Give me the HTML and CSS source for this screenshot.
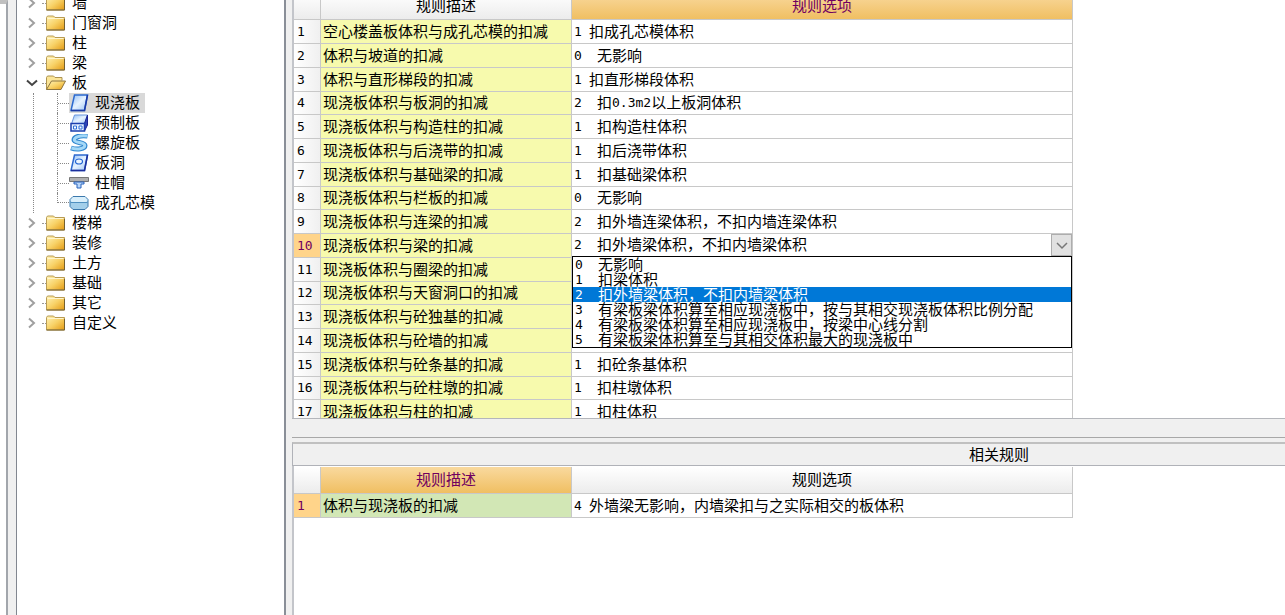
FILE: index.html
```html
<!DOCTYPE html>
<html lang="zh-CN">
<head>
<meta charset="utf-8">
<title>扣减规则</title>
<link rel="stylesheet" href="styles.css">
</head>
<body>
<svg class="defs" aria-hidden="true">
  <defs>
    <linearGradient id="gold" x1="0" y1="0" x2="1" y2="1"><stop offset="0" stop-color="#fff3b8"/><stop offset=".5" stop-color="#f8d267"/><stop offset="1" stop-color="#e39a14"/></linearGradient>
    <linearGradient id="pane" x1="0" y1="0" x2="1" y2="1"><stop offset="0" stop-color="#8dbcf6"/><stop offset=".5" stop-color="#e6f2ff"/><stop offset="1" stop-color="#9cc4f4"/></linearGradient>
    <symbol id="folder" viewBox="0 0 20 18"><path d="M.5 3.500l1-1.500h6l1.500 1.500h9.500v12.500H.5z" fill="url(#gold)" stroke="#b79b55"/><path d="M1.500 4.500h16" stroke="#fff6cf"/><path d="M.5 16h18V5" fill="none" stroke="#74602f"/></symbol>
    <symbol id="folder-open" viewBox="0 0 20 18"><path d="M.5 15.500V3.500l1-1.500h6l1.500 1.500h7v3" fill="#fbe597" stroke="#ad9350"/><path d="M.5 15.500l5-8.500h14l-4.500 8.500z" fill="url(#gold)" stroke="#8b7440"/></symbol>
    <symbol id="slab" viewBox="0 0 20 18"><path d="M5.500 1h13l-3 15.500H2z" fill="url(#pane)" stroke="#2b6ad0" stroke-width="1.500"/><path d="M2 16.500h13.500l3-15.500" fill="none" stroke="#1c3aa6" stroke-width="1.500"/></symbol>
    <symbol id="precast" viewBox="0 0 20 18"><path d="M5.500 1h13l-3 9H2.500z" fill="url(#pane)" stroke="#6a96de"/><path d="M15.500 17l3-6V1l-3 8.500z" fill="#3148b8" stroke="#1c2395"/><path d="M2 9.500h13.500V17H2z" fill="#e6f1ff" stroke="#1c3fae" stroke-width="1.500"/><path d="M4.500 12h3v3h-3zM10 12h3v3h-3z" fill="#fff" stroke="#2f6fd8"/></symbol>
    <symbol id="spiral" viewBox="0 0 20 18"><path d="M18.500 2C11 1 5 3 5 6s11 2 11 5.500S8 16 2 14" fill="none" stroke="#2f86cf" stroke-width="5"/><path d="M18 2C11 1.200 5.300 3 5.300 6s10.500 2 10.500 5.500S8 15.800 2.500 14" fill="none" stroke="#a4d8f7" stroke-width="3"/></symbol>
    <symbol id="hole" viewBox="0 0 20 18"><path d="M5.500 1h13l-3 15.500H2z" fill="url(#pane)" stroke="#2e6ad0" stroke-width="1.500"/><path d="M2 16.500h13.500l3-15.500" fill="none" stroke="#1c2f9c" stroke-width="1.500"/><ellipse cx="10" cy="7.500" rx="3.500" ry="2.500" fill="#e9f4ff" stroke="#2264d2" stroke-width="1.200"/></symbol>
    <symbol id="cap" viewBox="0 0 20 18"><path d="M.5 3.500h19v4H.5z" fill="#b0b0b0" stroke="#777"/><path d="M5 8h10v2h-3v4H8v-4H5z" fill="#b9d7fa" stroke="#2862bd"/></symbol>
    <symbol id="core" viewBox="0 0 20 18"><path d="M4 2.500h12l3 3v7l-3 3H4l-3-3v-7z" fill="#a3cfea" stroke="#3b78ac"/><path d="M4 3h12l2.500 3-1 2h-15l-1-2z" fill="#d9effb"/><path d="M1.500 8.500h17" stroke="#4f90c0"/></symbol>
    <symbol id="chev" viewBox="0 0 12 12"><path d="M3 1.500l5 4.500-5 4.500" fill="none" stroke="#a0a0a0" stroke-width="2"/></symbol>
    <symbol id="chev-open" viewBox="0 0 12 12"><path d="M1 3.500l5 4.500 5-4.500" fill="none" stroke="#444" stroke-width="2"/></symbol>
  </defs>
</svg>
<div class="app">
  <div class="edge"></div>
  <div class="splitter"></div>
  <nav class="tree">
    <ul class="nodes">
      <li><div class="node"><svg class="chev"><use href="#chev"/></svg><i class="stub"></i><svg class="icon"><use href="#folder"/></svg><span class="name">墙</span></div></li>
      <li><div class="node"><svg class="chev"><use href="#chev"/></svg><i class="stub"></i><svg class="icon"><use href="#folder"/></svg><span class="name">门窗洞</span></div></li>
      <li><div class="node"><svg class="chev"><use href="#chev"/></svg><i class="stub"></i><svg class="icon"><use href="#folder"/></svg><span class="name">柱</span></div></li>
      <li><div class="node"><svg class="chev"><use href="#chev"/></svg><i class="stub"></i><svg class="icon"><use href="#folder"/></svg><span class="name">梁</span></div></li>
      <li><div class="node"><svg class="chev"><use href="#chev-open"/></svg><i class="stub"></i><svg class="icon"><use href="#folder-open"/></svg><span class="name">板</span></div>
        <ul class="children">
          <li class="leaf"><i class="branch"></i><span class="item selected"><svg class="icon"><use href="#slab"/></svg><span class="name">现浇板</span></span></li>
          <li class="leaf"><i class="branch"></i><span class="item"><svg class="icon"><use href="#precast"/></svg><span class="name">预制板</span></span></li>
          <li class="leaf"><i class="branch"></i><span class="item"><svg class="icon"><use href="#spiral"/></svg><span class="name">螺旋板</span></span></li>
          <li class="leaf"><i class="branch"></i><span class="item"><svg class="icon"><use href="#hole"/></svg><span class="name">板洞</span></span></li>
          <li class="leaf"><i class="branch"></i><span class="item"><svg class="icon"><use href="#cap"/></svg><span class="name">柱帽</span></span></li>
          <li class="leaf"><i class="branch last"></i><span class="item"><svg class="icon"><use href="#core"/></svg><span class="name">成孔芯模</span></span></li>
        </ul>
      </li>
      <li><div class="node"><svg class="chev"><use href="#chev"/></svg><i class="stub"></i><svg class="icon"><use href="#folder"/></svg><span class="name">楼梯</span></div></li>
      <li><div class="node"><svg class="chev"><use href="#chev"/></svg><i class="stub"></i><svg class="icon"><use href="#folder"/></svg><span class="name">装修</span></div></li>
      <li><div class="node"><svg class="chev"><use href="#chev"/></svg><i class="stub"></i><svg class="icon"><use href="#folder"/></svg><span class="name">土方</span></div></li>
      <li><div class="node"><svg class="chev"><use href="#chev"/></svg><i class="stub"></i><svg class="icon"><use href="#folder"/></svg><span class="name">基础</span></div></li>
      <li><div class="node"><svg class="chev"><use href="#chev"/></svg><i class="stub"></i><svg class="icon"><use href="#folder"/></svg><span class="name">其它</span></div></li>
      <li><div class="node"><svg class="chev"><use href="#chev"/></svg><i class="stub"></i><svg class="icon"><use href="#folder"/></svg><span class="name">自定义</span></div></li>
    </ul>
  </nav>
  <div class="splitter wide"></div>
  <main class="rules">
    <section class="pane upper">
      <table class="grid">
        <colgroup><col class="c-num"><col class="c-desc"><col class="c-opt"></colgroup>
        <thead><tr><th></th><th>规则描述</th><th class="active">规则选项</th></tr></thead>
        <tbody>
          <tr><th>1</th><td>空心楼盖板体积与成孔芯模的扣减</td><td><span class="code near">1</span>扣成孔芯模体积</td></tr>
          <tr><th>2</th><td>体积与坡道的扣减</td><td><span class="code">0</span>无影响</td></tr>
          <tr><th>3</th><td>体积与直形梯段的扣减</td><td><span class="code near">1</span>扣直形梯段体积</td></tr>
          <tr><th>4</th><td>现浇板体积与板洞的扣减</td><td><span class="code">2</span>扣<span class="mono">0.3m2</span>以上板洞体积</td></tr>
          <tr><th>5</th><td>现浇板体积与构造柱的扣减</td><td><span class="code">1</span>扣构造柱体积</td></tr>
          <tr><th>6</th><td>现浇板体积与后浇带的扣减</td><td><span class="code">1</span>扣后浇带体积</td></tr>
          <tr><th>7</th><td>现浇板体积与基础梁的扣减</td><td><span class="code">1</span>扣基础梁体积</td></tr>
          <tr><th>8</th><td>现浇板体积与栏板的扣减</td><td><span class="code">0</span>无影响</td></tr>
          <tr><th>9</th><td>现浇板体积与连梁的扣减</td><td><span class="code">2</span>扣外墙连梁体积，不扣内墙连梁体积</td></tr>
          <tr class="current"><th>10</th><td>现浇板体积与梁的扣减</td><td class="editing">
            <div class="combo">
              <span class="value"><span class="code">2</span>扣外墙梁体积，不扣内墙梁体积</span>
              <button class="drop" type="button" aria-label="展开选项"><svg viewBox="0 0 12 12"><path d="M1 4l5 5 5-5" fill="none" stroke="#777" stroke-width="1.500"/></svg></button>
              <ul class="menu" role="listbox">
                <li role="option"><span class="code">0</span>无影响</li>
                <li role="option"><span class="code">1</span>扣梁体积</li>
                <li role="option" class="chosen" aria-selected="true"><span class="code">2</span>扣外墙梁体积，不扣内墙梁体积</li>
                <li role="option"><span class="code">3</span>有梁板梁体积算至相应现浇板中，按与其相交现浇板体积比例分配</li>
                <li role="option"><span class="code">4</span>有梁板梁体积算至相应现浇板中，按梁中心线分割</li>
                <li role="option"><span class="code">5</span>有梁板梁体积算至与其相交体积最大的现浇板中</li>
              </ul>
            </div></td></tr>
          <tr><th>11</th><td>现浇板体积与圈梁的扣减</td><td></td></tr>
          <tr><th>12</th><td>现浇板体积与天窗洞口的扣减</td><td></td></tr>
          <tr><th>13</th><td>现浇板体积与砼独基的扣减</td><td></td></tr>
          <tr><th>14</th><td>现浇板体积与砼墙的扣减</td><td></td></tr>
          <tr><th>15</th><td>现浇板体积与砼条基的扣减</td><td><span class="code">1</span>扣砼条基体积</td></tr>
          <tr><th>16</th><td>现浇板体积与砼柱墩的扣减</td><td><span class="code">1</span>扣柱墩体积</td></tr>
          <tr><th>17</th><td>现浇板体积与柱的扣减</td><td><span class="code">1</span>扣柱体积</td></tr>
        </tbody>
      </table>
    </section>
    <div class="status"></div>
    <h2 class="caption">相关规则</h2>
    <section class="pane lower">
      <table class="grid">
        <colgroup><col class="c-num"><col class="c-desc"><col class="c-opt"></colgroup>
        <thead><tr><th></th><th class="active">规则描述</th><th>规则选项</th></tr></thead>
        <tbody><tr class="current green"><th>1</th><td>体积与现浇板的扣减</td><td><span class="code near">4</span>外墙梁无影响，内墙梁扣与之实际相交的板体积</td></tr></tbody>
      </table>
    </section>
  </main>
</div>
</body>
</html>
```

FILE: styles.css
```css
* { box-sizing: border-box; }
body {
  margin: 0;
  background: #fff;
  color: #000;
  font: 15px/20px "Noto Sans CJK SC", sans-serif;
}
ul { list-style: none; margin: 0; padding: 0; }
.defs { position: absolute; width: 0; height: 0; }

.app { display: flex; height: 100vh; overflow: hidden; }

.edge {
  flex: none;
  width: 8px;
  background: #fff;
  border-top: 4px solid #c0c0c0;
  border-right: 2px solid #a2a6ac;
}
.splitter {
  flex: none;
  width: 9px;
  background: #f0f0f0;
  border-right: 1px solid #828790;
}
.splitter.wide { width: 8px; border-left: 2px solid #8a8f98; border-right: 0; }

/* Component tree */
.tree { flex: none; width: 267px; overflow: hidden; }
.nodes { margin-top: -7px; }
.node { display: flex; align-items: center; height: 20px; padding-left: 9px; }
.chev { flex: none; width: 12px; height: 12px; }
.stub { width: 4px; margin: 0 0 0 4px; border-top: 1px dotted #999; }
.icon { flex: none; width: 20px; height: 18px; }
.name { padding: 0 5px 2px 6px; line-height: 18px; white-space: nowrap; }
.children { margin-left: 16px; border-left: 1px dotted #888; }
.leaf { display: flex; height: 20px; padding-left: 23px; }
.branch {
  position: relative;
  width: 12px;
  border-left: 1px dotted #888;
}
.branch::after {
  content: "";
  position: absolute;
  inset: 10px 0 auto 0;
  border-top: 1px dotted #888;
}
.branch.last { height: 10px; }
.branch.last::after { top: 9px; }
.item { display: flex; align-items: center; }
.item.selected { background: #d9d9d9; }

/* Rules panes */
.rules { flex: 1; min-width: 0; display: flex; flex-direction: column; background: #f0f0f0; }
.pane { background: #fff; border-left: 2px solid #c3c5ca; overflow: hidden; }
.upper { flex: none; height: 418px; }
.upper .grid { margin-top: -7px; }
.lower { flex: 1; padding-top: 1px; }

.grid { width: 779px; border-collapse: separate; border-spacing: 0; table-layout: fixed; }
.c-num { width: 27px; }
.c-desc { width: 251px; }
.grid th, .grid td {
  height: 24px;
  padding: 0 0 2px 2px;
  border-right: 1px solid #c8c8c8;
  border-bottom: 1px solid #c8c8c8;
  line-height: 20px;
  font-weight: 400;
  text-align: left;
  white-space: nowrap;
}
.upper tbody tr:nth-child(4n) > * { height: 23px; }
.grid thead th {
  height: 27px;
  padding: 0 0 2px;
  text-align: center;
  background: linear-gradient(#fff, #ececec);
}
.grid thead th.active { background: linear-gradient(#f9d99e, #f0bf62); color: #700060; }
.grid tbody th {
  padding: 0 0 0 3px;
  font: 13px/20px "DejaVu Sans Mono", monospace;
  background: linear-gradient(90deg, #fff, #f0f0f0);
}
.grid tbody td:nth-child(2) { background: #f7faad; }
.grid .current th { background: #ffd48a; color: #700060; }
.grid .green td:nth-child(2) { background: #d2e7b5; }

.code, .mono { font: 13px/13px "DejaVu Sans Mono", monospace; vertical-align: 1px; }
.code { display: inline-block; width: 23px; }
.code.near { width: 15px; }

/* Cell editor with its drop-down list */
.grid .editing { padding: 0; vertical-align: top; }
.combo { position: relative; display: flex; height: 22px; }
.value { flex: 1; padding-left: 2px; }
.drop {
  width: 21px;
  padding: 0;
  background: #e1e1e1;
  border: 1px solid #adadad;
}
.drop svg { display: block; width: 12px; height: 12px; margin: auto; }
.menu {
  position: absolute;
  z-index: 1;
  top: 100%;
  left: 0;
  right: 0;
  background: #fff;
  border: 1px solid #000;
}
.menu li { height: 15px; padding-left: 2px; line-height: 13px; }
.menu .chosen { background: #0078d7; color: #fff; }

.status { height: 20px; border-top: 1px solid #b4b6bb; border-bottom: 1px solid #a8a8a8; }
.caption {
  margin: 4px 0 0;
  height: 24px;
  border: 1px solid #b0b2b8;
  border-top: 2px solid #c0c0c0;
  border-right: 0;
  font-size: 15px;
  line-height: 19px;
  font-weight: 400;
  text-align: center;
  padding-left: 420px;
}
```
